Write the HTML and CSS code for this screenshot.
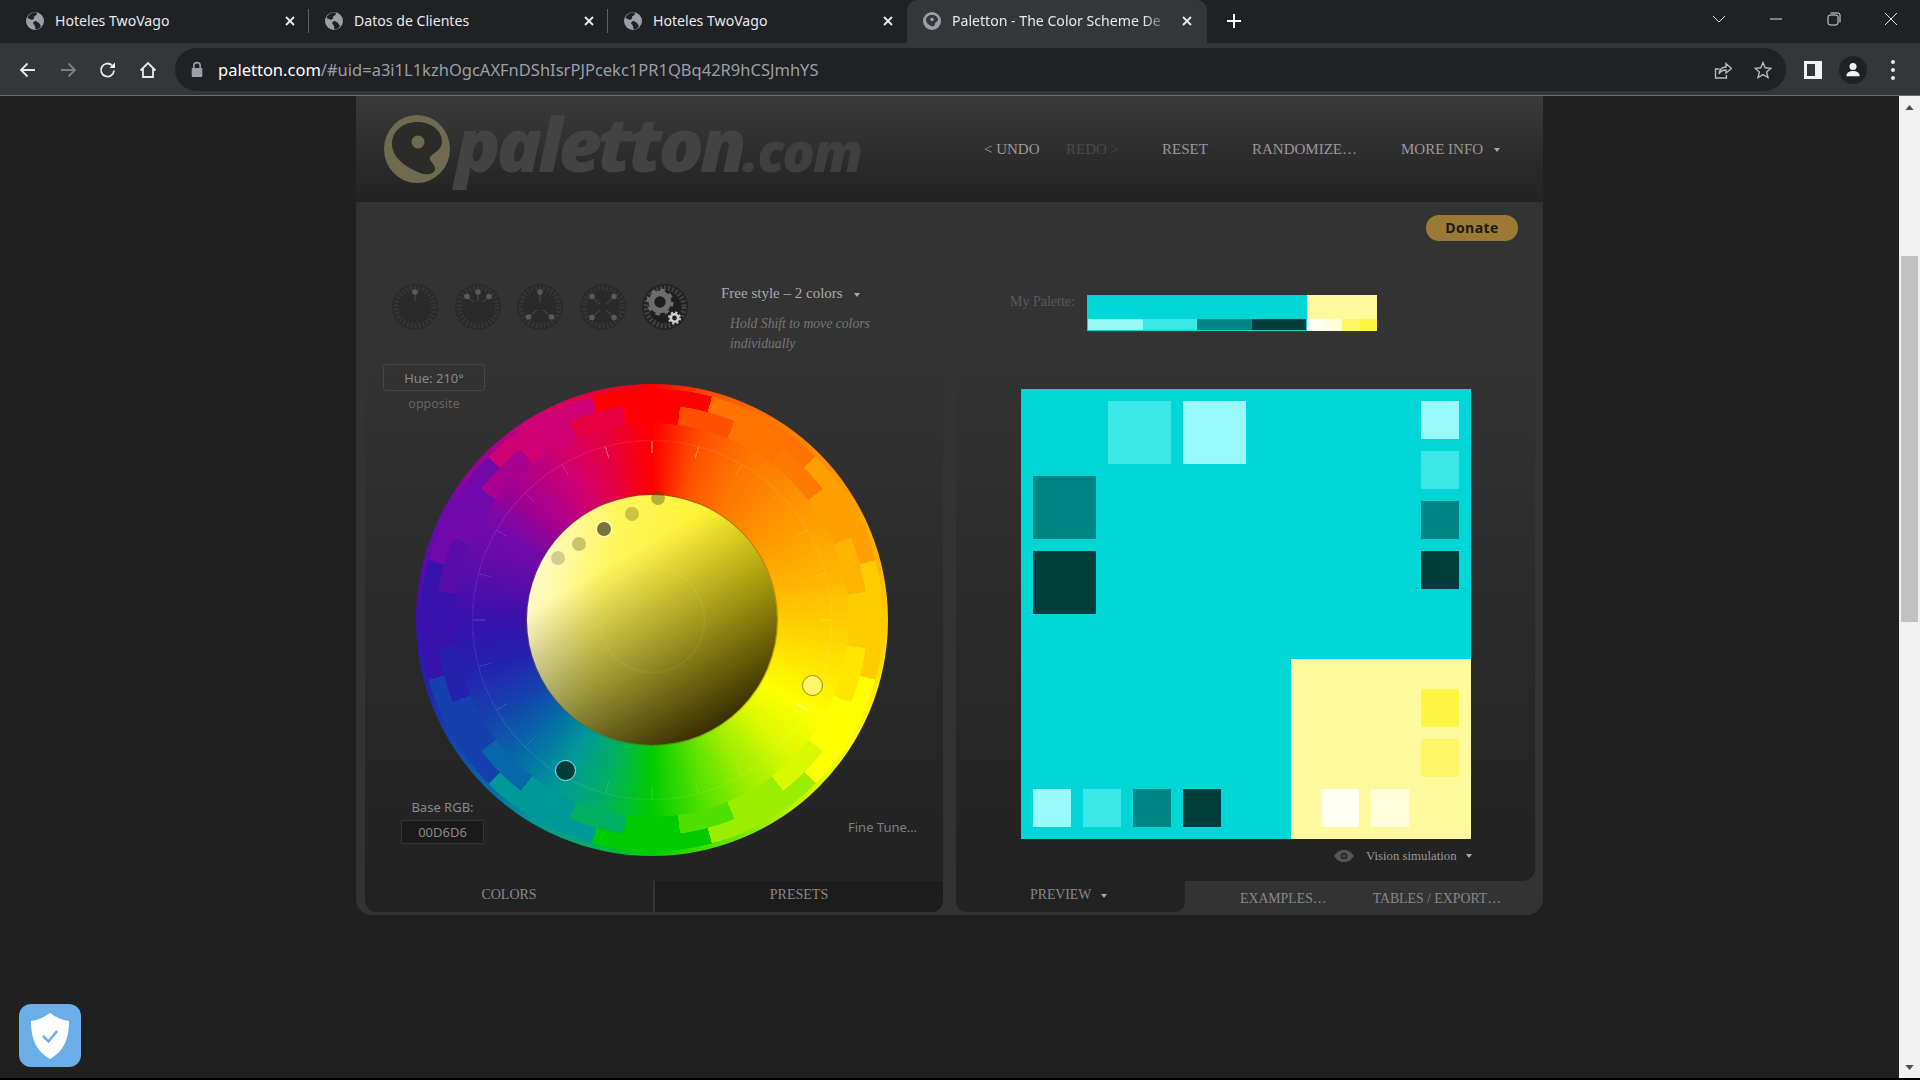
FILE: index.html
```html
<!DOCTYPE html>
<html lang="en">
<head>
  <meta charset="UTF-8" />
  <meta name="viewport" content="width=device-width, initial-scale=1.0" />
  <title>Paletton - The Color Scheme Designer</title>
  <link rel="stylesheet" href="styles.css">
</head>
<body>
  <svg class="defs" width="0" height="0">
    <symbol id="globe" viewBox="0 0 18 18">
      <circle cx="9" cy="9" r="9" fill="#9aa0a6"/>
      <path d="M7 .5 C4 2 2 4 1.500 6 L5 7.500 C7 8.500 9 6 8 4.500 L10.500 3 L11 .5Z M10 9 C8 9 6.500 10.500 7.500 12 L9 14 L9.500 17.500 C12 17.500 14 16 15 14 L13 11 Z" fill="#202124"/>
    </symbol>
    <symbol id="knob" viewBox="-23 -23 46 46">
      <circle r="23" fill="#2a2a2a"/>
      <circle r="19" fill="none" stroke="#363636" stroke-width="5" stroke-dasharray="2 2"/>
      <circle r="15.500" fill="#2a2a2a"/>
    </symbol>
  </svg>

  <div class="tabstrip">
    <div class="tab">
      <svg class="favicon"><use href="#globe"/></svg>
      <span class="tab-title">Hoteles TwoVago</span>
      <svg class="tab-close" viewBox="0 0 10 10"><path d="M1 1 L9 9 M9 1 L1 9"/></svg>
    </div>
    <div class="tab">
      <svg class="favicon"><use href="#globe"/></svg>
      <span class="tab-title">Datos de Clientes</span>
      <svg class="tab-close" viewBox="0 0 10 10"><path d="M1 1 L9 9 M9 1 L1 9"/></svg>
    </div>
    <div class="tab tab-last">
      <svg class="favicon"><use href="#globe"/></svg>
      <span class="tab-title">Hoteles TwoVago</span>
      <svg class="tab-close" viewBox="0 0 10 10"><path d="M1 1 L9 9 M9 1 L1 9"/></svg>
    </div>
    <div class="tab tab-active">
      <svg class="favicon" viewBox="0 0 18 18">
        <circle cx="9" cy="9" r="9" fill="#9aa0a6"/>
        <path d="M9 3 C12.500 3 15 5 15 7.500 C15 10 12 10 12 12 C12 14 10 15 8 14 C5 12.500 3 10.500 3 8 C3 5 5.500 3 9 3Z" fill="#35363a"/>
        <circle cx="9" cy="7.500" r="1.800" fill="#9aa0a6"/>
      </svg>
      <span class="tab-title tab-fade">Paletton - The Color Scheme De</span>
      <svg class="tab-close" viewBox="0 0 10 10"><path d="M1 1 L9 9 M9 1 L1 9"/></svg>
    </div>
    <svg class="new-tab" viewBox="0 0 16 16"><path d="M8 1 V15 M1 8 H15"/></svg>
    <div class="win-controls">
      <span class="win-slot"><svg width="14" height="14" viewBox="0 0 14 14"><path d="M1 4 L7 10 L13 4"/></svg></span>
      <span class="win-slot"><svg width="14" height="14" viewBox="0 0 14 14"><path d="M1 7 H13"/></svg></span>
      <span class="win-slot"><svg width="14" height="14" viewBox="0 0 14 14"><rect x="1" y="3" width="10" height="10" rx="2"/><path d="M3.500 1 H11 Q13 1 13 3 V10.500"/></svg></span>
      <span class="win-slot"><svg width="14" height="14" viewBox="0 0 14 14"><path d="M1 1 L13 13 M13 1 L1 13"/></svg></span>
    </div>
  </div>

  <div class="toolbar">
    <span class="tool"><svg viewBox="0 0 18 18"><path d="M16 9 H2 M8.500 2.500 L2 9 L8.500 15.500"/></svg></span>
    <span class="tool tool-off"><svg viewBox="0 0 18 18"><path d="M2 9 H16 M9.500 2.500 L16 9 L9.500 15.500"/></svg></span>
    <span class="tool"><svg viewBox="0 0 18 18"><path d="M15 9.500 A6.500 6.500 0 1 1 13 4.300"/><path class="solid" d="M16 1.500 V7 H10.500Z"/></svg></span>
    <span class="tool"><svg viewBox="0 0 18 18"><path d="M1.500 9.500 L9 2 L16.500 9.500 M4 8 V16 H14 V8"/></svg></span>
    <div class="omnibox">
      <svg class="lock" viewBox="0 0 12 16"><path d="M3 7 V4.500 A3 3 0 0 1 9 4.500 V7" fill="none" stroke="#9aa0a6" stroke-width="1.500"/><rect x="1" y="6.500" width="10" height="8.500" rx="1" fill="#9aa0a6"/></svg>
      <span class="url"><span class="url-host">paletton.com</span>/#uid=a3i1L1kzhOgcAXFnDShIsrPJPcekc1PR1QBq42R9hCSJmhYS</span>
      <span class="tool tool-dim"><svg viewBox="0 0 18 18"><path d="M5.500 8 H1.500 V17 H12.500 V14"/><path d="M5 13 C5.500 8.500 8 6 12 6 V2.500 L17.500 7.500 L12 12 V9 C9 9 6.500 10 5 13Z"/></svg></span>
      <span class="tool tool-dim"><svg viewBox="0 0 18 18"><path d="M9 1.500 L11.200 6.800 L17 7.300 L12.600 11 L14 16.500 L9 13.600 L4 16.500 L5.400 11 L1 7.300 L6.800 6.800Z"/></svg></span>
    </div>
    <span class="tool"><svg viewBox="0 0 18 18"><rect class="solid" x="0" y="0" width="18" height="18"/><rect x="3" y="3" width="8" height="12" fill="#35363a" stroke="none"/></svg></span>
    <span class="tool"><span class="avatar"><svg viewBox="0 0 18 18"><circle class="solid" cx="9" cy="5" r="4"/><path class="solid" d="M1.500 16 C1.500 11.500 5 10 9 10 C13 10 16.500 11.500 16.500 16Z"/></svg></span></span>
    <span class="tool"><span class="kebab"><i></i><i></i><i></i></span></span>
  </div>

  <div class="viewport">
    <div class="page">
      <div class="card">
        <div class="card-head">
          <div class="logo">
            <svg class="logo-mark" viewBox="0 0 68 69">
              <ellipse cx="33" cy="34" rx="33" ry="34" fill="#6f6a50"/>
              <path d="M33 7 C47 7 58 15 58 27 C58 35 50 37 46 42 C44 46 52 49 51 55 C49 60 42 60 36 58 C22 52 8 43 8 29 C8 16 19 7 33 7Z" fill="#2b2b2a"/>
              <ellipse cx="34" cy="27" rx="6.500" ry="6.500" fill="#6f6a50"/>
            </svg>
            <span class="logo-name">paletton<span class="logo-tld">.com</span></span>
          </div>
          <nav class="nav">
            <span>&lt; UNDO</span>
            <span class="nav-off">REDO &gt;</span>
            <span>RESET</span>
            <span>RANDOMIZE…</span>
            <span>MORE INFO<i class="caret caret-nav"></i></span>
          </nav>
        </div>

        <div class="card-body">
          <a class="donate">Donate</a>

          <section class="col-left">
            <div class="panel-left">
              <div class="controls">
                <div class="knobs">
                  <svg class="knob" viewBox="-23 -23 46 46"><use href="#knob" x="-23" y="-23" width="46" height="46"/><g class="needle"><path d="M0 -14 V-6"/><circle cy="-15" r="2.800"/></g></svg>
                  <svg class="knob" viewBox="-23 -23 46 46"><use href="#knob" x="-23" y="-23" width="46" height="46"/><g class="needle"><path d="M0 -14 V-6 M-10 -9 L-4 -5 M10 -9 L4 -5"/><circle cy="-15" r="2.800"/><circle cx="-11" cy="-10.500" r="2.800"/><circle cx="11" cy="-10.500" r="2.800"/></g></svg>
                  <svg class="knob" viewBox="-23 -23 46 46"><use href="#knob" x="-23" y="-23" width="46" height="46"/><g class="needle"><path d="M0 -14 V-4 M-10 9 L-3 3 M10 9 L3 3"/><circle cy="-15" r="2.800"/><circle cx="-11.500" cy="10" r="2.800"/><circle cx="11.500" cy="10" r="2.800"/></g></svg>
                  <svg class="knob" viewBox="-23 -23 46 46"><use href="#knob" x="-23" y="-23" width="46" height="46"/><g class="needle"><path d="M-10 -9 L-3 -3 M10 -9 L3 -3 M-10 9 L-3 3 M10 9 L3 3"/><circle cx="-11" cy="-10.500" r="2.800"/><circle cx="11" cy="-10.500" r="2.800"/><circle cx="-11" cy="10.500" r="2.800"/><circle cx="11" cy="10.500" r="2.800"/></g></svg>
                  <svg class="knob" viewBox="-23 -23 46 46">
                    <circle r="23" fill="#222"/>
                    <circle r="19" fill="none" stroke="#444" stroke-width="5" stroke-dasharray="2 2"/>
                    <circle r="15.500" fill="#1f1f1f"/>
                    <circle cx="-5" cy="-5" r="8.500" fill="none" stroke="#6e6e6e" stroke-width="5.500"/>
                    <circle cx="-5" cy="-5" r="12" fill="none" stroke="#6e6e6e" stroke-width="3" stroke-dasharray="4.500 4.920"/>
                    <circle cx="9.500" cy="11" r="7.500" fill="#222"/>
                    <circle cx="9.500" cy="11" r="3.700" fill="none" stroke="#d0d0d0" stroke-width="2.600"/>
                    <circle cx="9.500" cy="11" r="5.600" fill="none" stroke="#d0d0d0" stroke-width="1.800" stroke-dasharray="2.200 2.200"/>
                  </svg>
                </div>
                <div class="scheme">
                  <div class="scheme-name">Free style – 2 colors<i class="caret caret-scheme"></i></div>
                  <div class="scheme-hint">Hold Shift to move colors<br>individually</div>
                </div>
              </div>

              <div class="wheel-area">
                <div class="hue-info">
                  <div class="hue-box">Hue: 210°</div>
                  <div class="hue-note">opposite</div>
                </div>
                <div class="wheel">
                  <div class="ring ring-smooth"></div>
                  <div class="ring ring-coarse"></div>
                  <div class="ring ring-fine"></div>
                  <div class="ring ring-line"></div>
                  <div class="ring ring-ticks"></div>
                  <div class="shade"></div>
                  <i class="dot dot-a"></i>
                  <i class="dot dot-b"></i>
                  <i class="dot dot-c"></i>
                  <i class="dot dot-d"></i>
                  <i class="dot dot-e"></i>
                  <i class="pin pin-base"></i>
                  <i class="pin pin-compl"></i>
                </div>
                <div class="base-rgb">
                  <div class="base-label">Base RGB:</div>
                  <div class="base-input">00D6D6</div>
                </div>
                <div class="fine-tune">Fine Tune…</div>
              </div>
            </div>
            <div class="tabs-left">
              <div class="tab-colors">COLORS</div>
              <div class="tab-presets">PRESETS</div>
            </div>
          </section>

          <section class="col-right">
            <div class="panel-right">
              <div class="my-palette">
                <span class="my-label">My Palette:</span>
                <div class="strip">
                  <div class="strip-part strip-cyan">
                    <div class="strip-row"><i class="c-light"></i><i class="c-mid"></i><i class="c-dark"></i><i class="c-deep"></i></div>
                  </div>
                  <div class="strip-part strip-yellow">
                    <div class="strip-row"><i class="y-pale"></i><i class="y-cream"></i><i class="y-soft"></i><i class="y-hot"></i></div>
                  </div>
                </div>
              </div>

              <div class="preview">
                <div class="pv-block"></div>
                <i class="sw c-mid big-a"></i>
                <i class="sw c-light big-b"></i>
                <i class="sw c-dark big-c"></i>
                <i class="sw c-deep big-d"></i>
                <i class="sw c-light col-a"></i>
                <i class="sw c-mid col-b"></i>
                <i class="sw c-dark col-c"></i>
                <i class="sw c-deep col-d"></i>
                <i class="sw y-hot col-e"></i>
                <i class="sw y-soft col-f"></i>
                <i class="sw c-light row-a"></i>
                <i class="sw c-mid row-b"></i>
                <i class="sw c-dark row-c"></i>
                <i class="sw c-deep row-d"></i>
                <i class="sw y-pale row-e"></i>
                <i class="sw y-cream row-f"></i>
              </div>

              <div class="vision">
                <svg class="eye" viewBox="0 0 20 12"><path d="M0 6 C3 1.500 6.500 0 10 0 C13.500 0 17 1.500 20 6 C17 10.500 13.500 12 10 12 C6.500 12 3 10.500 0 6Z" fill="#555"/><circle cx="10" cy="6" r="3.500" fill="#2a2a2a"/><circle cx="10" cy="6" r="1.500" fill="#555"/></svg>
                <span>Vision simulation</span><i class="caret caret-vision"></i>
              </div>
            </div>
            <div class="tabs-right">
              <div class="tab-preview">PREVIEW<i class="caret caret-preview"></i></div>
              <div class="tab-link tab-examples">EXAMPLES…</div>
              <div class="tab-link tab-tables">TABLES / EXPORT…</div>
            </div>
          </section>
        </div>
      </div>
    </div>

    <div class="scrollbar">
      <svg class="scroll-arrow" viewBox="0 0 10 6"><path d="M5 0 L10 6 H0Z"/></svg>
      <div class="scroll-thumb"></div>
      <svg class="scroll-arrow scroll-down" viewBox="0 0 10 6"><path d="M0 0 H10 L5 6Z"/></svg>
    </div>
  </div>

  <div class="shield">
    <svg viewBox="0 0 38 46">
      <path d="M19 0 C24 4 31 7 38 8 C38 26 33 38 19 46 C5 38 0 26 0 8 C7 7 14 4 19 0Z" fill="#fff"/>
      <path d="M12 23 L17.500 28.500 L26 18" fill="none" stroke="#6aaeea" stroke-width="2.500"/>
    </svg>
  </div>
</body>
</html>
```

FILE: styles.css
```css
* { box-sizing:border-box; }
html, body { height:100%; }
body {
  margin:0;
  overflow:hidden;
  display:flex;
  flex-direction:column;
  background:#202020;
  font-family:"Liberation Serif", serif;
  border-bottom:2px solid #000;
}
i { display:block; font-style:normal; }
.defs { position:absolute; }

/* browser chrome */
.tabstrip {
  display:flex;
  align-items:stretch;
  height:43px;
  padding-left:10px;
  background:#202124;
  font-family:"Noto Sans", sans-serif;
}
.tab {
  position:relative;
  display:flex;
  align-items:center;
  width:299px;
  padding:0 14px 2px 16px;
  color:#e8eaed;
  font-size:14.1px;
}
.tab::after {
  content:"";
  position:absolute;
  right:0;
  top:9px;
  bottom:10px;
  width:1px;
  background:#5f6368;
}
.tab-last::after, .tab-active::after { display:none; }
.tab-active {
  width:300px;
  padding-right:15px;
  background:#35363a;
  border-radius:10px 10px 0 0;
}
.favicon { width:18px; height:18px; flex:none; margin-right:11px; }
.tab-title { flex:1; white-space:nowrap; overflow:hidden; }
.tab-fade { mask-image:linear-gradient(to right, #000 88%, transparent 100%); -webkit-mask-image:linear-gradient(to right, #000 88%, transparent 100%); }
.tab-close { width:10px; height:10px; flex:none; margin-left:12px; }
.tab-close path { stroke:#e8eaed; stroke-width:1.800; fill:none; }
.new-tab { width:16px; height:16px; align-self:center; margin-left:19px; margin-bottom:2px; }
.new-tab path { stroke:#fff; stroke-width:2; fill:none; }
.win-controls { display:flex; margin-left:auto; }
.win-slot { width:57.5px; display:flex; align-items:center; justify-content:center; padding-bottom:6px; }
.win-slot svg { fill:none; stroke:#dfe1e5; stroke-width:1; }

.toolbar {
  display:flex;
  align-items:center;
  height:53px;
  padding:1px 7px 0 8px;
  background:#35363a;
  border-bottom:1px solid #6b6c70;
}
.tool {
  display:flex;
  align-items:center;
  justify-content:center;
  flex:none;
  width:40px;
  height:40px;
}
.tool svg { width:18px; height:18px; fill:none; stroke:#e8eaed; stroke-width:1.800; }
.tool .solid { fill:#f1f3f4; stroke:none; }
.tool-off svg { stroke:#7d7f83; }
.tool-dim svg { stroke:#b6b8bb; stroke-width:1.400; }
.omnibox {
  flex:1;
  display:flex;
  align-items:center;
  height:43px;
  margin:0 7px;
  padding:0 3px 0 15px;
  background:#202124;
  border-radius:22px;
}
.lock { width:14px; height:17px; flex:none; margin-right:14px; }
.url {
  flex:1;
  color:#9aa0a6;
  font:16.5px "Noto Sans", sans-serif;
  white-space:nowrap;
}
.url-host { color:#fff; }
.avatar {
  display:flex;
  align-items:center;
  justify-content:center;
  width:28px;
  height:28px;
  border-radius:50%;
  background:#202124;
}
.avatar svg { width:16px; height:16px; }
.kebab { display:flex; flex-direction:column; gap:4px; }
.kebab i { width:4px; height:4px; border-radius:50%; background:#e8eaed; }

/* page */
.viewport { flex:1; display:flex; min-height:0; }
.page { flex:1; min-width:0; }
.card {
  width:1187px;
  height:819px;
  margin:0 auto;
  background:#333;
  border-radius:0 0 16px 16px;
}
.card-head {
  display:flex;
  align-items:center;
  height:106px;
  background:linear-gradient(#3a3a3a, #222);
}
.logo {
  display:flex;
  align-items:center;
  width:628px;
  padding-left:28px;
}
.logo-mark { width:68px; height:69px; flex:none; margin-right:3px; }
.logo-name {
  font:italic 800 75px "Open Sans", sans-serif;
  letter-spacing:-4px;
  line-height:1;
  color:#434343;
  margin-top:-12px;
}
.logo-tld { font-size:54px; letter-spacing:-2px; color:#3f3f3f; }
.nav {
  display:grid;
  grid-template-columns:82px 96px 90px 149px auto;
  color:#999;
  font-size:15px;
  white-space:nowrap;
}
.nav-off { color:#4a4a4a; }
.caret {
  display:inline-block;
  width:0;
  height:0;
  border-left:3px solid transparent;
  border-right:3px solid transparent;
  border-top:4px solid #aaa;
  vertical-align:middle;
}
.caret-nav { margin-left:11px; }
.caret-scheme { margin-left:11px; }
.caret-vision { margin-left:9px; }
.caret-preview { margin-left:10px; }

.card-body {
  position:relative;
  display:flex;
  gap:13px;
  height:713px;
  padding:0 8px 3px 9px;
}
.donate {
  position:absolute;
  right:25px;
  top:13px;
  width:92px;
  height:26px;
  border-radius:13px;
  background:#9a7a35;
  color:#1c1a14;
  font:700 14px/26px "Open Sans", sans-serif;
  letter-spacing:.4px;
  text-align:center;
}
.col-left, .col-right { display:flex; flex-direction:column; height:710px; }
.col-left { width:578px; }
.col-right { width:579px; }

/* left column */
.panel-left {
  flex:1;
  background:linear-gradient(#333 0, #333 22%, #222 100%);
}
.controls { display:flex; height:158px; padding:82px 0 0 27px; }
.knobs { display:flex; gap:16.5px; }
.knob { width:46px; height:46px; }
.needle path { stroke:#4d4d4d; stroke-width:1; fill:none; }
.needle circle { fill:#5a5a5a; }
.scheme { margin-left:33px; }
.scheme-name { color:#aaa; font-size:15px; line-height:19px; }
.scheme-hint {
  margin:11px 0 0 9px;
  color:#777;
  font-size:13.7px;
  font-style:italic;
  line-height:20px;
}
.wheel-area { position:relative; height:521px; padding:24px 0 0 51px; }
.hue-info {
  position:absolute;
  z-index:1;
  left:18px;
  top:4px;
  width:102px;
  font-family:"Noto Sans", sans-serif;
  text-align:center;
}
.hue-box {
  height:27px;
  border:1px solid #464646;
  border-radius:3px;
  color:#888;
  font-size:13px;
  line-height:27px;
}
.hue-note { margin-top:4px; color:#666; font-size:12.5px; line-height:18px; }
.wheel { position:relative; width:472px; height:472px; border-radius:50%; }
.ring { position:absolute; inset:0; border-radius:50%; }
.ring-smooth {
  background:conic-gradient(#f00, #ff5000 15deg, #ff7400 30deg, #ff8a00 45deg, #ffa000 60deg, #ffb400 75deg, #fc0 90deg, #ffe500 105deg, #ff0 120deg, #d9f900 135deg, #9cee00 150deg, #50e000 165deg, #00cc00 180deg, #00b060 195deg, #009999 210deg, #0668a8 225deg, #1640ae 240deg, #2520ad 255deg, #3812ad 270deg, #5a0ca8 285deg, #7109aa 300deg, #a80090 315deg, #cd0074 330deg, #e60040 345deg, #f00);
}
.ring-coarse {
  background:conic-gradient(from -15deg, #f00 0 30deg, #ff7400 0 60deg, #ffa000 0 90deg, #fc0 0 120deg, #ff0 0 150deg, #9cee00 0 180deg, #00cc00 0 210deg, #009999 0 240deg, #1640ae 0 270deg, #3812ad 0 300deg, #7109aa 0 330deg, #cd0074 0 360deg);
  mask-image:radial-gradient(circle, transparent 214.5px, #000 215px 231px, transparent 231.5px);
  -webkit-mask-image:radial-gradient(circle, transparent 214.5px, #000 215px 231px, transparent 231.5px);
}
.ring-fine {
  background:conic-gradient(from -7.5deg, #f00 0 15deg, #ff5000 0 30deg, #ff7400 0 45deg, #ff7a00 0 60deg, #ffa000 0 75deg, #ffb400 0 90deg, #fc0 0 105deg, #ffe500 0 120deg, #ff0 0 135deg, #d9f900 0 150deg, #9cee00 0 165deg, #50e000 0 180deg, #00cc00 0 195deg, #00b060 0 210deg, #009999 0 225deg, #0668a8 0 240deg, #1640ae 0 255deg, #2520ad 0 270deg, #3812ad 0 285deg, #5a0ca8 0 300deg, #7109aa 0 315deg, #a80090 0 330deg, #cd0074 0 345deg, #e60040 0 360deg);
  mask-image:radial-gradient(circle, transparent 196.5px, #000 197px 215px, transparent 215.5px);
  -webkit-mask-image:radial-gradient(circle, transparent 196.5px, #000 197px 215px, transparent 215.5px);
}
.ring-line {
  background:rgba(255,255,255,.07);
  mask-image:radial-gradient(circle, transparent 178.5px, #000 179px 180px, transparent 180.5px);
  -webkit-mask-image:radial-gradient(circle, transparent 178.5px, #000 179px 180px, transparent 180.5px);
}
.ring-ticks {
  background:
    conic-gradient(rgba(255,255,255,.25) 0 .3deg, transparent 0 14.8deg, rgba(255,255,255,.2) 0 15.2deg, transparent 0 119.7deg, rgba(255,255,255,.4) 0 120.3deg, transparent 0 344.8deg, rgba(255,255,255,.2) 0 345.2deg, transparent 0 359.7deg, rgba(255,255,255,.25) 0),
    repeating-conic-gradient(from -.2deg, rgba(255,255,255,.1) 0 .4deg, transparent 0 15deg);
  mask-image:radial-gradient(circle, transparent 167px, #000 167.5px 179px, transparent 179.5px);
  -webkit-mask-image:radial-gradient(circle, transparent 167px, #000 167.5px 179px, transparent 179.5px);
}
.shade {
  position:absolute;
  left:111px;
  top:111px;
  width:250px;
  height:250px;
  border-radius:50%;
  background:
    radial-gradient(circle, transparent 51px, rgba(255,255,255,.05) 52px 53px, transparent 54px),
    repeating-conic-gradient(from -.15deg, rgba(255,255,255,.03) 0 .3deg, transparent 0 30deg),
    linear-gradient(150deg, rgba(0,0,0,0) 30%, rgba(0,0,0,.38) 58%, rgba(35,25,0,.93) 88%),
    linear-gradient(100deg, #fffce8 0, #fff65c 32%, #ffee00 100%);
  box-shadow:0 0 1px 1px rgba(120,90,30,.6);
}
.dot {
  position:absolute;
  width:14px;
  height:14px;
  margin:-7px 0 0 -7px;
  border-radius:50%;
  background:rgba(60,60,0,.25);
}
.dot-a { left:241.7px; top:114.3px; background:rgba(80,80,30,.4); }
.dot-b { left:215.7px; top:130px; background:rgba(80,80,30,.3); }
.dot-c { left:188px; top:144.7px; background:#77743c; box-shadow:0 0 0 1px #fffdd8; }
.dot-d { left:163px; top:159.7px; background:rgba(80,80,30,.3); }
.dot-e { left:141.7px; top:173.7px; background:rgba(80,80,50,.25); }
.pin {
  position:absolute;
  width:21px;
  height:21px;
  margin:-10.5px 0 0 -10.5px;
  border-radius:50%;
}
.pin-base { left:149.7px; top:386.3px; background:#003d3d; border:1.5px solid #a8e8e8; }
.pin-compl { left:396.3px; top:301.3px; background:#fff566; border:1.5px solid #8f8a30; }
.base-rgb {
  position:absolute;
  left:36px;
  top:438px;
  width:83px;
  font-family:"Noto Sans", sans-serif;
  font-size:13px;
  text-align:center;
  color:#888;
}
.base-label { line-height:18px; margin-bottom:4px; }
.base-input {
  height:24px;
  background:#1a1a1a;
  border:1px solid #333;
  line-height:22px;
}
.fine-tune {
  position:absolute;
  left:483px;
  top:458px;
  color:#7b7f82;
  font:13px/18px "Noto Sans", sans-serif;
  white-space:nowrap;
}
.tabs-left {
  display:flex;
  height:31px;
  background:#222;
  border-radius:0 0 12px 12px;
  overflow:hidden;
  color:#888;
  font-size:14px;
  line-height:27px;
  text-align:center;
}
.tab-colors { width:288px; }
.tab-presets { flex:1; background:#1c1c1c; border-left:2px solid #333; }

/* right column */
.panel-right {
  flex:1;
  padding:93px 0 0 54px;
  background:linear-gradient(#333 0, #333 22%, #222 100%);
  border-radius:0 0 12px 0;
}
.my-palette { display:flex; height:36px; }
.my-label { width:77px; color:#5a5a5a; font-size:14px; line-height:13px; padding-top:0; }
.strip { display:flex; width:290px; height:36px; }
.strip-part { display:flex; align-items:flex-end; }
.strip-cyan { width:220px; padding:0 1px 1px; background:#00d6d6; }
.strip-yellow { flex:1; background:#fff99d; }
.strip-row { display:flex; flex:1; height:11px; }
.strip-yellow .strip-row { height:12px; }
.strip-row i { flex:1; }
.c-light { background:#99f8f8; }
.c-mid { background:#3ce7e7; }
.c-dark { background:#008585; }
.c-deep { background:#003d3d; }
.y-pale { background:#fffff1; }
.y-cream { background:#fffddc; }
.y-soft { background:#fff566; }
.y-hot { background:#fff545; }

.preview {
  display:grid;
  grid-template-columns:repeat(36, 12.5px);
  grid-template-rows:repeat(36, 12.5px);
  width:450px;
  height:450px;
  margin:58px 0 0 11px;
  background:#00d6d6;
}
.pv-block { grid-area:22 / 22 / -1 / -1; margin:7.5px 0 0 7.5px; background:#fff99d; }
.sw { z-index:1; margin:-.5px 0 0 -.5px; }
.big-a { grid-area:2 / 8 / 7 / 13; }
.big-b { grid-area:2 / 14 / 7 / 19; }
.big-c { grid-area:8 / 2 / 13 / 7; }
.big-d { grid-area:14 / 2 / 19 / 7; }
.col-a { grid-area:2 / 33 / 5 / 36; }
.col-b { grid-area:6 / 33 / 9 / 36; }
.col-c { grid-area:10 / 33 / 13 / 36; }
.col-d { grid-area:14 / 33 / 17 / 36; }
.col-e { grid-area:25 / 33 / 28 / 36; }
.col-f { grid-area:29 / 33 / 32 / 36; }
.row-a { grid-area:33 / 2 / 36 / 5; }
.row-b { grid-area:33 / 6 / 36 / 9; }
.row-c { grid-area:33 / 10 / 36 / 13; }
.row-d { grid-area:33 / 14 / 36 / 17; }
.row-e { grid-area:33 / 25 / 36 / 28; }
.row-f { grid-area:33 / 29 / 36 / 32; }

.vision {
  display:flex;
  align-items:center;
  height:34px;
  padding-left:324px;
  color:#999;
  font-size:12.8px;
}
.eye { width:20px; height:12px; margin-right:12px; }
.tabs-right { display:flex; height:31px; color:#888; font-size:13.8px; }
.tab-preview {
  width:229px;
  padding-left:74px;
  line-height:28px;
  background:#222;
  border-radius:0 0 10px 10px;
}
.tab-link { line-height:35px; white-space:nowrap; }
.tab-examples { margin-left:55px; }
.tab-tables { margin-left:46px; }

/* scrollbar */
.scrollbar {
  position:relative;
  display:flex;
  flex-direction:column;
  width:21px;
  background:#f1f1f1;
  padding:0 2px;
}
.scroll-arrow { width:9px; height:5px; margin:9px auto 0; fill:#505050; }
.scroll-thumb { height:366px; margin-top:146px; background:#c1c1c1; }
.scroll-down { margin:auto auto 8px; }

/* extension badge over the page */
.shield {
  position:fixed;
  left:19px;
  top:1004px;
  display:flex;
  align-items:center;
  justify-content:center;
  width:62px;
  height:63px;
  border-radius:12px;
  background:#6aaeea;
}
.shield svg { width:38px; height:46px; }
```
